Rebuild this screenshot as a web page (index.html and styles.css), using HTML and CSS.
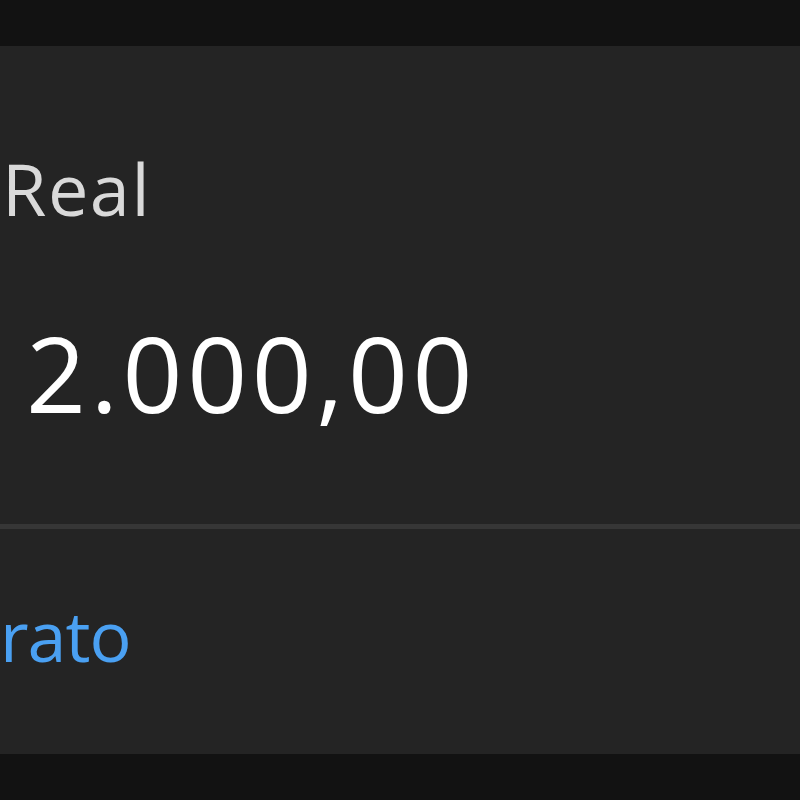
FILE: index.html
```html
<!DOCTYPE html>
<html>
<head>
<meta charset="utf-8">
<link rel="stylesheet" href="styles.css">
</head>
<body>
<div class="topbar"></div>
<div class="card">
  <div class="balance">
    <div class="label">Real</div>
    <div class="amount">2.000,00</div>
  </div>
  <div class="divider"></div>
  <div class="link-row">
    <div class="link">rato</div>
  </div>
</div>
<div class="bottombar"></div>
</body>
</html>
```
FILE: styles.css
```css
html, body {
  margin: 0;
  padding: 0;
  background: #121212;
  font-family: "Open Sans", "Liberation Sans", sans-serif;
  overflow: hidden;
}
.topbar {
  height: 46px;
  background: #121212;
}
.card {
  height: 708px;
  background: #242424;
  display: flex;
  flex-direction: column;
}
.balance {
  height: 478px;
  padding-top: 106px;
  box-sizing: border-box;
}
.label {
  font-size: 72px;
  line-height: 1;
  color: #d9d9d9;
  padding-left: 2px;
  letter-spacing: 1.5px;
}
.amount {
  margin-top: 96px;
  font-size: 105px;
  line-height: 1;
  color: #ffffff;
  padding-left: 26px;
  letter-spacing: 4.5px;
}
.divider {
  height: 5px;
  background: #363636;
}
.link-row {
  flex: 1;
  padding-top: 71px;
  box-sizing: border-box;
}
.link {
  font-size: 70px;
  line-height: 1;
  color: #4aa0f2;
  letter-spacing: -1px;
}
.bottombar {
  height: 46px;
  background: #121212;
}
```
